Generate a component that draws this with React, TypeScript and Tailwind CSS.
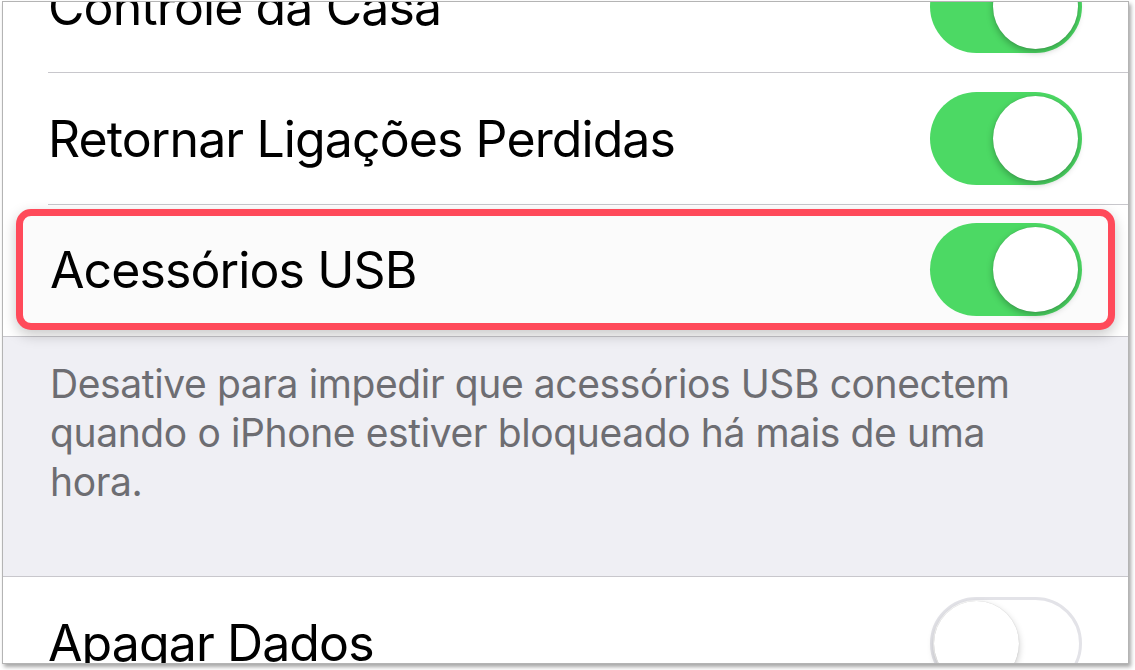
import React from "react";

const Toggle = ({ on }: { on: boolean }) =>
  on ? (
    <div className="flex h-[93px] w-[152px] shrink-0 justify-end rounded-full bg-[#4cd964] p-[4px]">
      <div className="h-[85px] w-[85px] rounded-full bg-white shadow-[0_3px_7px_rgba(0,0,0,0.28),0_0_1px_rgba(0,0,0,0.2)]" />
    </div>
  ) : (
    <div className="flex h-[93px] w-[152px] shrink-0 justify-start rounded-full border-[3px] border-[#e3e3e8] bg-white p-[1px]">
      <div className="h-[85px] w-[85px] rounded-full bg-white shadow-[0_3px_7px_rgba(0,0,0,0.22),0_0_1px_rgba(0,0,0,0.2)]" />
    </div>
  );

const Row = ({ label, on, last }: { label: string; on: boolean; last?: boolean }) => (
  <div className="h-[132px] bg-white pl-[45px]">
    <div
      className={
        "flex h-full items-center justify-between pr-[46px] " +
        (last ? "" : "border-b border-[#c8c7cc]")
      }
    >
      <span className="text-[50px] leading-none tracking-[-0.018em] text-black">{label}</span>
      <Toggle on={on} />
    </div>
  </div>
);

export default function App() {
  return (
    <div
      className="h-[670px] w-[1135px] overflow-hidden bg-white"
      style={{ fontFamily: "Inter, 'Noto Sans', sans-serif" }}
    >
      <div className="ml-[2px] mt-[1px] h-[663px] w-[1127px] overflow-hidden border border-[#b4b4b4] bg-white shadow-[2px_3px_4px_rgba(0,0,0,0.35)]">
        <div className="-mt-[61px]">
          <Row label="Controle da Casa" on />
          <Row label="Retornar Ligações Perdidas" on />

          {/* linha destacada */}
          <div className="relative z-10 h-[132px] border-b border-[#c8c7cc] bg-white px-[13px] pb-[6px] pt-[4px]">
            <div className="flex h-full items-center justify-between rounded-[15px] border-[7px] border-[#ff4a5a] bg-[#fbfbfb] pl-[27px] pr-[26px] shadow-[0_5px_14px_rgba(0,0,0,0.22)]">
              <span className="text-[50px] leading-none tracking-[-0.018em] text-black">
                Acessórios USB
              </span>
              <Toggle on />
            </div>
          </div>

          <div className="h-[240px] border-b border-[#c8c7cc] bg-[#efeff4] pl-[47px] pt-[22px]">
            <p className="text-[39px] leading-[49px] tracking-[-0.01em] text-[#6d6d72]">
              Desative para impedir que acessórios USB conectem
              <br />
              quando o iPhone estiver bloqueado há mais de uma
              <br />
              hora.
            </p>
          </div>

          <Row label="Apagar Dados" on={false} last />
        </div>
      </div>
    </div>
  );
}
